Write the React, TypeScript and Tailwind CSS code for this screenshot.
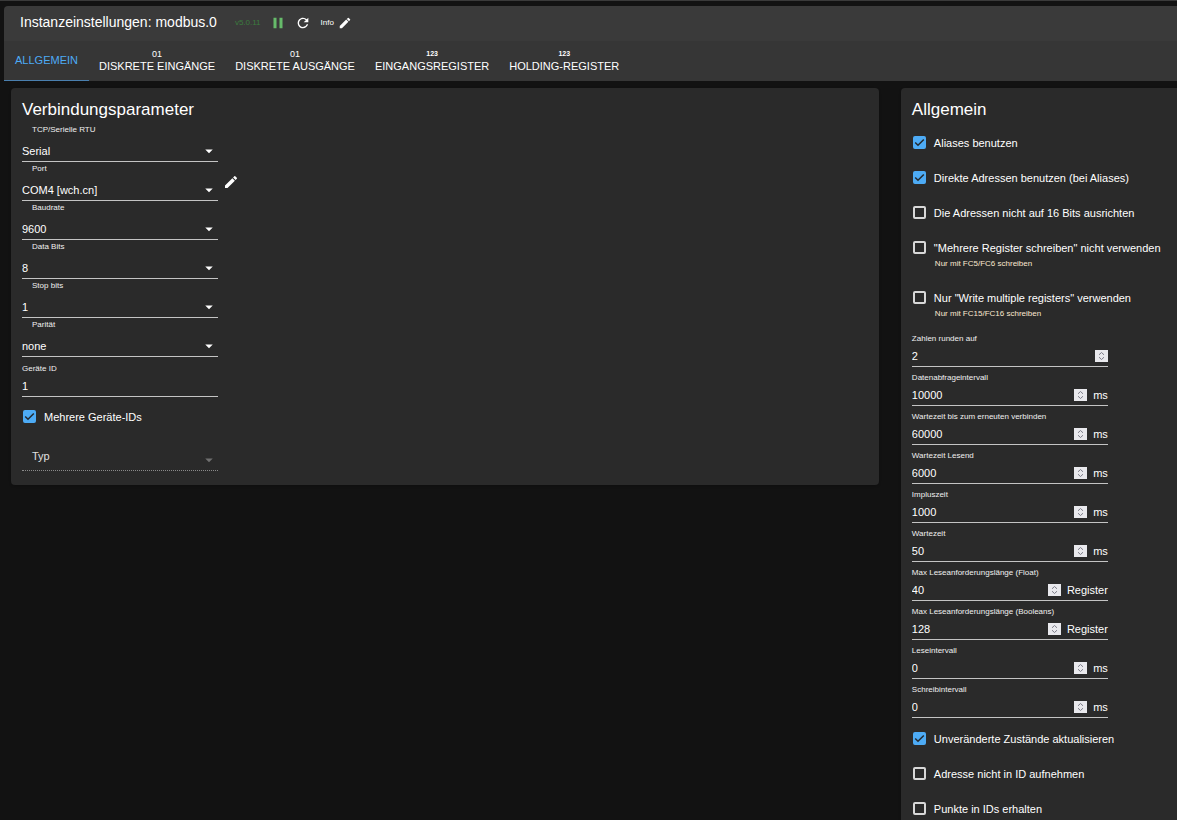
import React, { useId, useState } from "react";
import { MdArrowDropDown, MdEdit, MdPause, MdRefresh } from "react-icons/md";

const TABS = [
  { label: "Allgemein" },
  { label: "Diskrete Eingänge", badge: "01" },
  { label: "Diskrete Ausgänge", badge: "01" },
  { label: "Eingangsregister", badge: "123" },
  { label: "Holding-Register", badge: "123" },
];

const CONNECTION = [
  { label: "TCP/Serielle RTU", value: "Serial", options: ["Serial", "TCP"] },
  { label: "Port", value: "COM4 [wch.cn]", options: ["COM4 [wch.cn]"], editable: true },
  { label: "Baudrate", value: "9600", options: ["9600", "19200", "38400", "115200"] },
  { label: "Data Bits", value: "8", options: ["7", "8"] },
  { label: "Stop bits", value: "1", options: ["1", "2"] },
  { label: "Parität", value: "none", options: ["none", "even", "odd"] },
];

const FLAGS = [
  { label: "Aliases benutzen", checked: true },
  { label: "Direkte Adressen benutzen (bei Aliases)", checked: true },
  { label: "Die Adressen nicht auf 16 Bits ausrichten" },
  { label: '"Mehrere Register schreiben" nicht verwenden', hint: "Nur mit FC5/FC6 schreiben" },
  { label: 'Nur "Write multiple registers" verwenden', hint: "Nur mit FC15/FC16 schreiben" },
];

const NUMBERS = [
  { label: "Zahlen runden auf", value: 2 },
  { label: "Datenabfrageintervall", value: 10000, unit: "ms" },
  { label: "Wartezeit bis zum erneuten verbinden", value: 60000, unit: "ms" },
  { label: "Wartezeit Lesend", value: 6000, unit: "ms" },
  { label: "Impluszeit", value: 1000, unit: "ms" },
  { label: "Wartezeit", value: 50, unit: "ms" },
  { label: "Max Leseanforderungslänge (Float)", value: 40, unit: "Register" },
  { label: "Max Leseanforderungslänge (Booleans)", value: 128, unit: "Register" },
  { label: "Leseintervall", value: 0, unit: "ms" },
  { label: "Schreibintervall", value: 0, unit: "ms" },
];

const MORE_FLAGS = [
  { label: "Unveränderte Zustände aktualisieren", checked: true },
  { label: "Adresse nicht in ID aufnehmen" },
  { label: "Punkte in IDs erhalten" },
];

function Checkbox({ label, checked, hint }: { label: string; checked?: boolean; hint?: string }) {
  const id = useId();
  return (
    <div className={hint ? "h-[50px]" : "h-[35px]"}>
      <div className="flex h-[35px] items-center gap-2">
        <span className="relative flex shrink-0 pl-px">
          <input
            id={id}
            type="checkbox"
            defaultChecked={checked}
            className="peer size-[13px] appearance-none rounded-xs border-2 border-[#d8d8d8] checked:border-[#4dabf5] checked:bg-[#4dabf5]"
          />
          <svg
            viewBox="0 0 13 13"
            className="pointer-events-none absolute top-0 right-0 hidden size-[13px] peer-checked:block"
            fill="none"
            stroke="#232a30"
            strokeWidth="1.5"
          >
            <path d="M2.2 6.5l2.8 2.8 5.8-5.8" />
          </svg>
        </span>
        <label htmlFor={id} className="whitespace-nowrap">
          {label}
        </label>
      </div>
      {hint && <p className="-mt-[7px] pl-[23px] text-[8px] leading-3 text-[#fbe8d0]">{hint}</p>}
    </div>
  );
}

function SelectField({ label, value, options, editable }: (typeof CONNECTION)[number]) {
  const id = useId();
  return (
    <div className="flex h-[39px] items-center gap-[5px]">
      <div className="w-[196px] border-b border-[#c4c4c4]">
        <label htmlFor={id} className="block pt-px pl-[10px] text-[8px] leading-3 text-[#f0f0f0]">
          {label}
        </label>
        <div className="relative pt-[5px]">
          <select
            id={id}
            defaultValue={value}
            className="block h-5 w-full appearance-none bg-transparent outline-none"
          >
            {options.map((o) => (
              <option key={o}>{o}</option>
            ))}
          </select>
          <MdArrowDropDown className="pointer-events-none absolute right-0 bottom-px size-[18px]" />
        </div>
      </div>
      {editable && (
        <button type="button" aria-label="Port bearbeiten">
          <MdEdit className="size-4" />
        </button>
      )}
    </div>
  );
}

function NumberField({ label, value, unit }: { label: string; value: number; unit?: string }) {
  const id = useId();
  return (
    <div className="h-[39px] w-[196px] border-b border-[#c4c4c4]">
      <label htmlFor={id} className="block pt-[5px] text-[8px] leading-3 text-[#f0f0f0]">
        {label}
      </label>
      <div className="flex h-[21px] items-center">
        <input
          id={id}
          type="number"
          defaultValue={value}
          className="w-0 min-w-0 flex-1 appearance-none bg-transparent outline-none [&::-webkit-inner-spin-button]:appearance-none"
        />
        <svg viewBox="0 0 13 12" className="h-3 w-[13px] bg-[#e9e9ed]" fill="none" stroke="#7c7c88">
          <path d="M4 4.8l2.5-2.3 2.5 2.3M4 7.2l2.5 2.3 2.5-2.3" />
        </svg>
        {unit && <span className="pl-[6px]">{unit}</span>}
      </div>
    </div>
  );
}

function DeviceIdField() {
  const id = useId();
  return (
    <div className="h-[39px] w-[196px] border-b border-[#c4c4c4]">
      <label htmlFor={id} className="block pt-[5px] text-[8px] leading-3 text-[#f0f0f0]">
        Geräte ID
      </label>
      <input id={id} defaultValue="1" className="block h-[21px] w-full bg-transparent outline-none" />
    </div>
  );
}

function Header() {
  return (
    <header className="flex h-[35px] shrink-0 items-center rounded-tl bg-[#3a3a3a] pb-px pl-4">
      <h1 className="pb-[2px] text-sm">Instanzeinstellungen: modbus.0</h1>
      <span className="ml-[18px] text-[8px] text-[#3b7a3e]">v5.0.11</span>
      <button type="button" aria-label="Pause" className="ml-2">
        <MdPause className="size-[18px] text-[#66bb6a]" />
      </button>
      <button type="button" aria-label="Neu starten" className="ml-2">
        <MdRefresh className="size-4" />
      </button>
      <button type="button" className="ml-[10px] flex items-center gap-1 text-[8px]">
        Info
        <MdEdit className="size-[14px]" />
      </button>
    </header>
  );
}

function Tabs() {
  const [active, setActive] = useState(0);
  return (
    <nav role="tablist" className="flex h-10 shrink-0 bg-[#363636]">
      {TABS.map((tab, i) => (
        <button
          key={tab.label}
          type="button"
          role="tab"
          aria-selected={i === active}
          onClick={() => setActive(i)}
          className={`flex min-w-[85px] flex-col items-center justify-center border-b px-[10px] pb-px uppercase ${
            i === active ? "border-[#4a7fae] text-[#4dabf5]" : "border-transparent"
          }`}
        >
          {tab.badge && (
            <span className={`leading-3 ${tab.badge === "123" ? "text-[7px] font-bold" : "text-[9px]"}`}>
              {tab.badge}
            </span>
          )}
          <span className="leading-3">{tab.label}</span>
        </button>
      ))}
    </nav>
  );
}

export default function App() {
  const typeId = useId();
  return (
    <div className="flex h-screen flex-col border-t border-[#3a3a3a] bg-[#121212] pt-[5px] pl-1 font-['Liberation_Sans',Arial,sans-serif] text-[11px] leading-4 text-white">
      <Header />
      <Tabs />
      <main className="grid min-h-0 flex-1 grid-cols-[22fr_7fr] items-start gap-x-[22px] overflow-y-auto pt-[7px] pl-[7px] [scrollbar-width:none]">
        <section className="rounded-sm bg-[#2a2a2a] px-[11px] pt-3 pb-[14px] shadow">
          <h2 className="text-[17px] leading-5">Verbindungsparameter</h2>
          <div className="pt-[3px] pb-px">
            {CONNECTION.map((field) => (
              <SelectField key={field.label} {...field} />
            ))}
          </div>
          <DeviceIdField />
          <div className="pt-[2px]">
            <Checkbox label="Mehrere Geräte-IDs" checked />
          </div>
          <div className="relative mt-2 flex h-[29px] w-[196px] items-center border-b border-dotted border-[#8a8a8a]">
            <label htmlFor={typeId} className="pl-[10px] text-[#e0e0e0]">
              Typ
            </label>
            <select id={typeId} disabled className="h-full flex-1 appearance-none bg-transparent" />
            <MdArrowDropDown className="pointer-events-none absolute right-0 bottom-px size-[18px] text-[#707070]" />
          </div>
        </section>

        <section className="rounded-l-sm bg-[#2a2a2a] px-[11px] pt-3 pb-[14px] shadow">
          <h2 className="text-[17px] leading-5">Allgemein</h2>
          <div className="pt-[5px]">
            {FLAGS.map((flag) => (
              <Checkbox key={flag.label} {...flag} />
            ))}
          </div>
          <div className="-mt-[2px]">
            {NUMBERS.map((field) => (
              <NumberField key={field.label} {...field} />
            ))}
          </div>
          <div className="pt-[3px]">
            {MORE_FLAGS.map((flag) => (
              <Checkbox key={flag.label} {...flag} />
            ))}
          </div>
        </section>
      </main>
    </div>
  );
}
